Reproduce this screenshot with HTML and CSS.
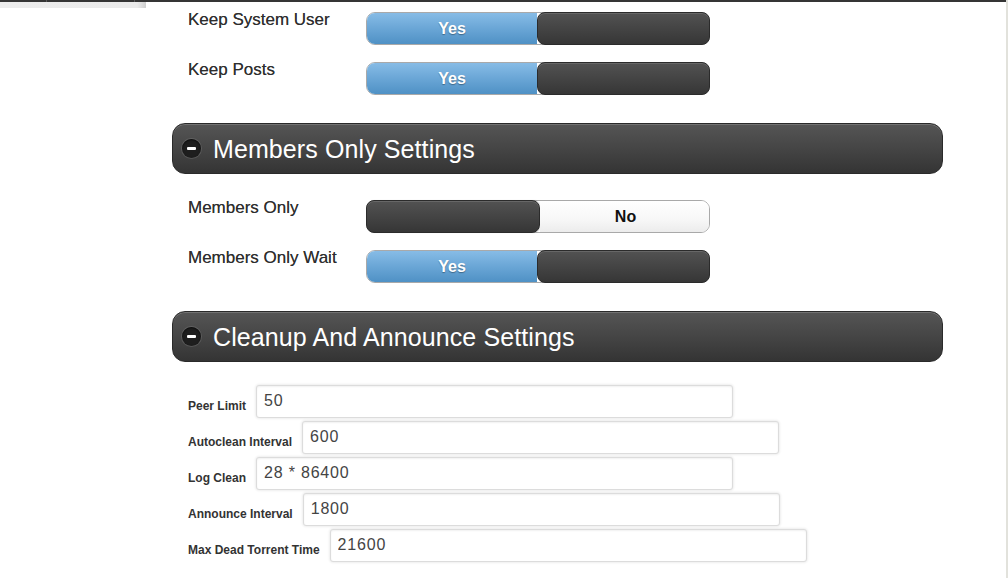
FILE: index.html
```html
<!DOCTYPE html>
<html>
<head>
<meta charset="utf-8">
<link rel="stylesheet" href="styles.css">
</head>
<body>
<div class="page">
  <div class="topbar"><span class="tick t1"></span><span class="tick t2"></span></div>
  <div class="substrip"></div>
  <div class="content">
    <div class="toggle-row first">
      <div class="toggle-label">Keep System User</div>
      <div class="toggle on"><div class="half yes">Yes</div><div class="knob"></div></div>
    </div>
    <div class="toggle-row">
      <div class="toggle-label">Keep Posts</div>
      <div class="toggle on"><div class="half yes">Yes</div><div class="knob"></div></div>
    </div>

    <div class="section-head">
      <span class="minus"><span class="bar"></span></span>
      <span class="section-title">Members Only Settings</span>
    </div>

    <div class="toggle-row first-after">
      <div class="toggle-label">Members Only</div>
      <div class="toggle off"><div class="knob"></div><div class="half no">No</div></div>
    </div>
    <div class="toggle-row">
      <div class="toggle-label">Members Only Wait</div>
      <div class="toggle on"><div class="half yes">Yes</div><div class="knob"></div></div>
    </div>

    <div class="section-head">
      <span class="minus"><span class="bar"></span></span>
      <span class="section-title">Cleanup And Announce Settings</span>
    </div>

    <div class="fields">
      <div class="field-row"><span class="field-label">Peer Limit</span><input class="field-input" type="text" value="50"></div>
      <div class="field-row"><span class="field-label">Autoclean Interval</span><input class="field-input" type="text" value="600"></div>
      <div class="field-row"><span class="field-label">Log Clean</span><input class="field-input" type="text" value="28 * 86400"></div>
      <div class="field-row"><span class="field-label">Announce Interval</span><input class="field-input" type="text" value="1800"></div>
      <div class="field-row"><span class="field-label">Max Dead Torrent Time</span><input class="field-input" type="text" value="21600"></div>
    </div>
  </div>
</div>
</body>
</html>
```

FILE: styles.css
```css
html, body {
  margin: 0;
  padding: 0;
  background: #ffffff;
}

body {
  font-family: "Liberation Sans", Arial, sans-serif;
  color: #333333;
}

.page {
  width: 1008px;
  height: 578px;
  box-sizing: border-box;
  border-right: 2px solid #e2e2dc;
  overflow: hidden;
}

.topbar {
  height: 2px;
  background: #353535;
  display: flex;
}

.tick {
  width: 1px;
  height: 2px;
  background: #5a5a5a;
}

.t1 { margin-left: 46px; }
.t2 { margin-left: 87px; }

.substrip {
  width: 146px;
  height: 6px;
  background: linear-gradient(to right, #ececec 0%, #ebebeb 94%, #cfcfcf 100%);
}

.content {
  margin-left: 172px;
  width: 771px;
  padding-top: 4px;
}

.toggle-row {
  display: flex;
  padding-left: 16px;
  margin-top: 17px;
}

.toggle-row.first {
  margin-top: 0;
}

.toggle-row.first-after {
  margin-top: 26px;
}

.toggle-label {
  width: 178px;
  font-size: 17px;
  line-height: 20px;
  margin-top: -2px;
  color: #2e2e2e;
  text-shadow: 0 0 0.4px rgba(0, 0, 0, 0.6);
}

.toggle {
  width: 344px;
  height: 33px;
  box-sizing: border-box;
  border: 1px solid #a9a9a9;
  border-radius: 9px;
  display: flex;
}

.half {
  font-size: 16px;
  font-weight: bold;
  display: flex;
  align-items: center;
  justify-content: center;
}

.half.yes {
  width: 170px;
  color: #ffffff;
  background: linear-gradient(to bottom, #87bce6 0%, #6aa6d6 50%, #4f91c5 100%);
  border-radius: 8px 0 0 8px;
  text-shadow: 0 1px 1px rgba(0, 0, 0, 0.35);
}

.half.no {
  flex: 1;
  color: #111111;
  background: linear-gradient(to bottom, #ffffff 0%, #f7f7f7 60%, #ececec 100%);
  border-radius: 0 8px 8px 0;
  padding-left: 2px;
}

.knob {
  box-sizing: border-box;
  border: 1px solid #2b2b2b;
  border-radius: 8px;
  background: linear-gradient(to bottom, #525252 0%, #444444 50%, #363636 100%);
  box-shadow: inset 0 1px 0 rgba(255, 255, 255, 0.12);
  margin: -1px -1px -1px 0;
  width: 173px;
}

.toggle.off .knob {
  margin: -1px 0 -1px -1px;
  width: 174px;
  box-shadow: inset 0 1px 0 rgba(255, 255, 255, 0.12), 1px 0 1px rgba(0, 0, 0, 0.15);
}

.section-head {
  margin-top: 28px;
  height: 51px;
  box-sizing: border-box;
  border: 1px solid #2a2a2a;
  border-radius: 13px;
  background: linear-gradient(to bottom, #555555 0%, #454545 50%, #343434 100%);
  box-shadow: inset 0 1px 0 rgba(255, 255, 255, 0.18);
  display: flex;
  align-items: center;
  padding-left: 9px;
}

.minus {
  width: 19px;
  height: 19px;
  border-radius: 50%;
  background: #1e1e1e;
  box-shadow: 0 0 0 1px rgba(255, 255, 255, 0.12), inset 0 1px 2px rgba(0, 0, 0, 0.6);
  display: flex;
  align-items: center;
  justify-content: center;
}

.minus .bar {
  width: 9px;
  height: 3px;
  border-radius: 1px;
  background: #ffffff;
}

.section-title {
  margin-left: 12px;
  font-size: 25px;
  letter-spacing: 0.1px;
  color: #ffffff;
  line-height: 30px;
}

.fields {
  margin-top: 23px;
  display: flex;
  flex-direction: column;
  gap: 3px;
}

.field-row {
  display: flex;
  align-items: center;
  padding-left: 16px;
}

.field-label {
  font-size: 12px;
  font-weight: bold;
  color: #333333;
  margin-right: 10px;
  padding-top: 8px;
}

.field-input {
  width: 477px;
  height: 33px;
  box-sizing: border-box;
  margin: 0;
  border: 1px solid #dcdcdc;
  border-radius: 3px;
  box-shadow: 0 0 3px rgba(0, 0, 0, 0.14), inset 0 1px 2px rgba(0, 0, 0, 0.06);
  padding: 0 0 2px 7px;
  font-family: "Liberation Sans", Arial, sans-serif;
  font-size: 16px;
  letter-spacing: 0.8px;
  color: #444444;
  background: #ffffff;
  outline: none;
}
```
